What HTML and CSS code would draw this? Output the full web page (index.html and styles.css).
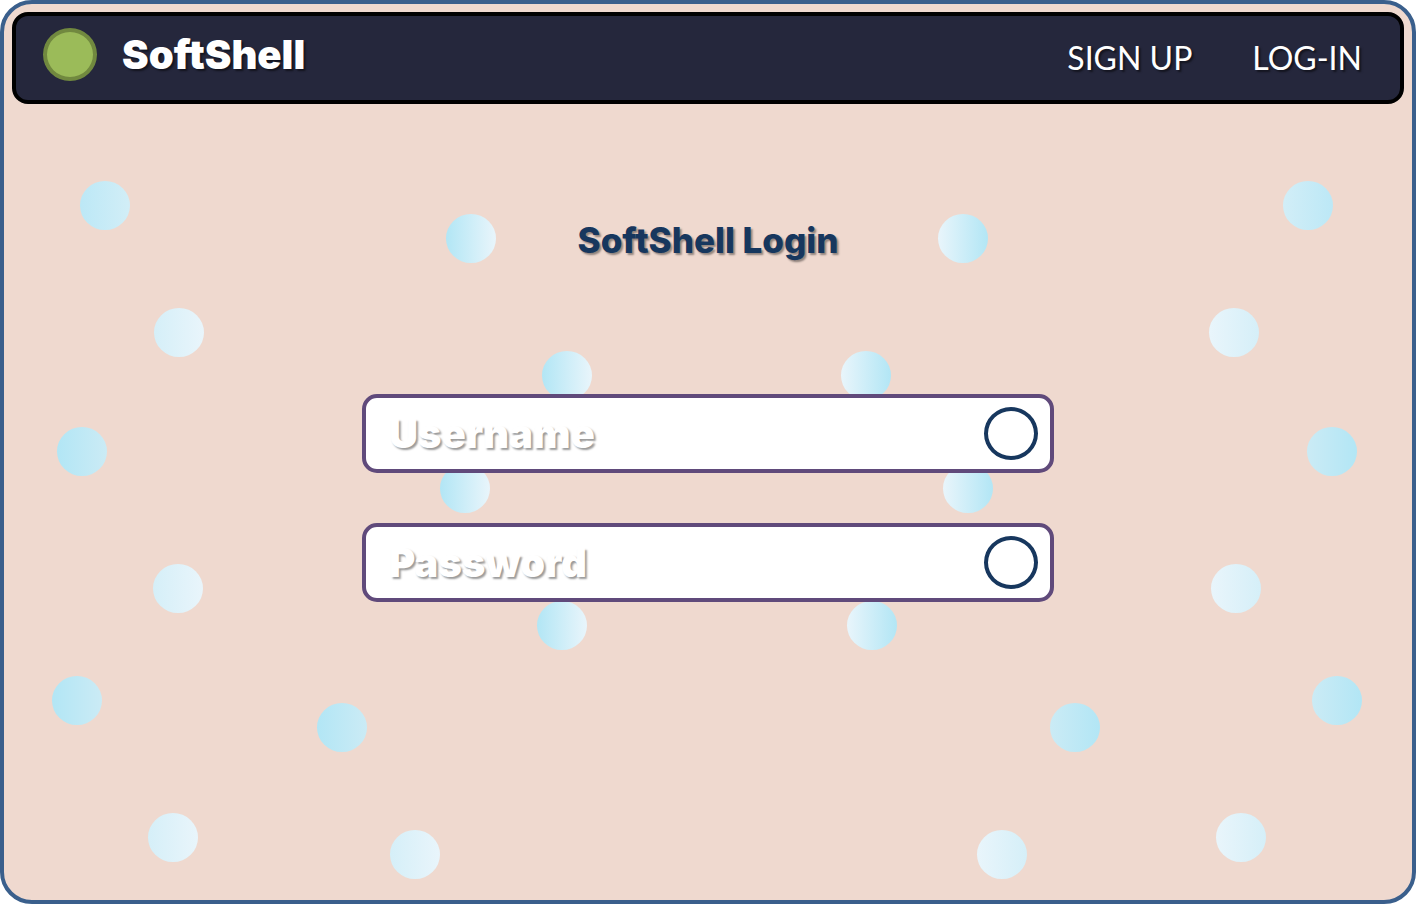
FILE: index.html
```html
<!DOCTYPE html>
<html lang="en">
<head>
<meta charset="utf-8">
<meta name="viewport" content="width=device-width, initial-scale=1">
<title>SoftShell Login</title>
<link rel="stylesheet" href="styles.css">
</head>
<body>
<div class="page">
  <svg class="dots" viewBox="0 0 1416 904" preserveAspectRatio="xMidYMid slice" aria-hidden="true">
    <defs>
      <linearGradient id="full"><stop offset="0" stop-color="#b2e6f5"/><stop offset="1" stop-color="#e9f5fb"/></linearGradient>
      <linearGradient id="deep"><stop offset="0" stop-color="#b2e6f5"/><stop offset="1" stop-color="#cbebf5"/></linearGradient>
      <linearGradient id="mid"><stop offset="0" stop-color="#bce8f6"/><stop offset="1" stop-color="#d2eef7"/></linearGradient>
      <linearGradient id="pale"><stop offset="0" stop-color="#d5eff8"/><stop offset="1" stop-color="#e9f5fb"/></linearGradient>
      <linearGradient id="full-r"><stop offset="0" stop-color="#e9f5fb"/><stop offset="1" stop-color="#b2e6f5"/></linearGradient>
      <linearGradient id="deep-r"><stop offset="0" stop-color="#cbebf5"/><stop offset="1" stop-color="#b2e6f5"/></linearGradient>
      <linearGradient id="mid-r"><stop offset="0" stop-color="#d2eef7"/><stop offset="1" stop-color="#bce8f6"/></linearGradient>
      <linearGradient id="pale-r"><stop offset="0" stop-color="#e9f5fb"/><stop offset="1" stop-color="#d5eff8"/></linearGradient>
    </defs>
    <g fill="url(#full)">
      <ellipse cx="471" cy="238.5" rx="25" ry="24.5"/>
      <ellipse cx="567" cy="375.5" rx="25" ry="24.5"/>
      <ellipse cx="465" cy="488.5" rx="25" ry="24.5"/>
      <ellipse cx="562" cy="625.5" rx="25" ry="24.5"/>
    </g>
    <g fill="url(#full-r)">
      <ellipse cx="963" cy="238.5" rx="25" ry="24.5"/>
      <ellipse cx="866" cy="375.5" rx="25" ry="24.5"/>
      <ellipse cx="968" cy="488.5" rx="25" ry="24.5"/>
      <ellipse cx="872" cy="625.5" rx="25" ry="24.5"/>
    </g>
    <g fill="url(#deep)">
      <ellipse cx="82" cy="451.5" rx="25" ry="24.5"/>
      <ellipse cx="77" cy="700.5" rx="25" ry="24.5"/>
      <ellipse cx="342" cy="727.5" rx="25" ry="24.5"/>
    </g>
    <g fill="url(#deep-r)">
      <ellipse cx="1332" cy="451.5" rx="25" ry="24.5"/>
      <ellipse cx="1337" cy="700.5" rx="25" ry="24.5"/>
      <ellipse cx="1075" cy="727.5" rx="25" ry="24.5"/>
    </g>
    <ellipse fill="url(#mid)" cx="105" cy="205.5" rx="25" ry="24.5"/>
    <ellipse fill="url(#mid-r)" cx="1308" cy="205.5" rx="25" ry="24.5"/>
    <g fill="url(#pale)">
      <ellipse cx="179" cy="332.5" rx="25" ry="24.5"/>
      <ellipse cx="178" cy="588.5" rx="25" ry="24.5"/>
      <ellipse cx="173" cy="837.5" rx="25" ry="24.5"/>
      <ellipse cx="415" cy="854.5" rx="25" ry="24.5"/>
    </g>
    <g fill="url(#pale-r)">
      <ellipse cx="1234" cy="332.5" rx="25" ry="24.5"/>
      <ellipse cx="1236" cy="588.5" rx="25" ry="24.5"/>
      <ellipse cx="1241" cy="837.5" rx="25" ry="24.5"/>
      <ellipse cx="1002" cy="854.5" rx="25" ry="24.5"/>
    </g>
  </svg>
  <header class="bar">
    <a class="brand" href="#home"><span class="logo"></span><span class="brand-name">SoftShell</span></a>
    <nav class="nav" aria-label="Account">
      <a class="nav-link" href="#signup">SIGN UP</a>
      <a class="nav-link" href="#login">LOG-IN</a>
    </nav>
  </header>
  <main class="login">
    <h1 class="title">SoftShell Login</h1>
    <form class="form">
      <div class="field">
        <label class="field-label" for="username">Username</label>
        <input class="field-input" id="username" type="text" autocomplete="username">
        <button class="field-button" type="button" aria-label="Confirm username"></button>
      </div>
      <div class="field">
        <label class="field-label" for="password">Password</label>
        <input class="field-input" id="password" type="password" autocomplete="current-password">
        <button class="field-button" type="button" aria-label="Confirm password"></button>
      </div>
    </form>
  </main>
</div>
</body>
</html>
```
FILE: styles.css
```css
* { box-sizing: border-box; }

body {
  margin: 0;
  background: #fff;
  font-family: Inter, "Liberation Sans", sans-serif;
}

.page {
  position: relative;
  display: flex;
  flex-direction: column;
  min-height: 100vh;
  padding: 8px;
  background: #efd9cf;
  border: 4px solid #3a5f8c;
  border-radius: 32px;
}

.dots {
  position: absolute;
  inset: -4px;
  width: calc(100% + 8px);
  height: calc(100% + 8px);
  pointer-events: none;
}

.bar {
  position: relative;
  display: flex;
  justify-content: space-between;
  align-items: flex-start;
  min-height: 92px;
  padding: 12px 38px 12px 27px;
  background: #25273c;
  border: 4px solid #000;
  border-radius: 16px;
}

.brand {
  display: flex;
  align-items: center;
  gap: 25px;
  color: #fff;
  text-decoration: none;
}

.logo {
  width: 54px;
  height: 53px;
  background: #9bbb59;
  border: 4px solid #71893f;
  border-radius: 50%;
}

.brand-name {
  font-size: 40px;
  font-weight: 900;
  line-height: 53px;
  text-shadow: 2px 2px 2px rgba(0, 0, 0, 0.5);
}

.nav {
  display: flex;
  gap: 60px;
  padding-top: 3px;
}

.nav-link {
  color: #fff;
  font-family: Lato, "Open Sans", sans-serif;
  font-size: 32px;
  line-height: 53px;
  text-decoration: none;
  text-shadow: 2px 2px 2px rgba(0, 0, 0, 0.5);
}

.login {
  position: relative;
  display: flex;
  flex-direction: column;
  align-items: center;
  padding-top: 112px;
}

.title {
  margin: 0;
  color: #17375e;
  font-size: 35px;
  font-weight: 800;
  line-height: 48px;
  text-align: center;
  text-shadow: 2px 2px 2px rgba(0, 0, 0, 0.4);
}

.form {
  display: flex;
  flex-direction: column;
  gap: 50px;
  width: 100%;
  max-width: 692px;
  margin-top: 130px;
}

.field {
  display: flex;
  align-items: center;
  height: 79px;
  padding: 0 12px 0 23px;
  background: #fff;
  border: 4px solid #604a7b;
  border-radius: 15px;
}

.field-label {
  color: #fff;
  font-size: 40px;
  font-weight: 900;
  line-height: 48px;
  text-shadow: 2px 2px 2px rgba(0, 0, 0, 0.4);
}

.field-input {
  flex: 1;
  min-width: 0;
  height: 100%;
  padding: 0 16px;
  color: #17375e;
  font: inherit;
  font-size: 28px;
  background: transparent;
  border: 0;
  outline: 0;
}

.field-button {
  flex: none;
  width: 54px;
  height: 53px;
  padding: 0;
  background: #fff;
  border: 4px solid #17375e;
  border-radius: 50%;
}
```
